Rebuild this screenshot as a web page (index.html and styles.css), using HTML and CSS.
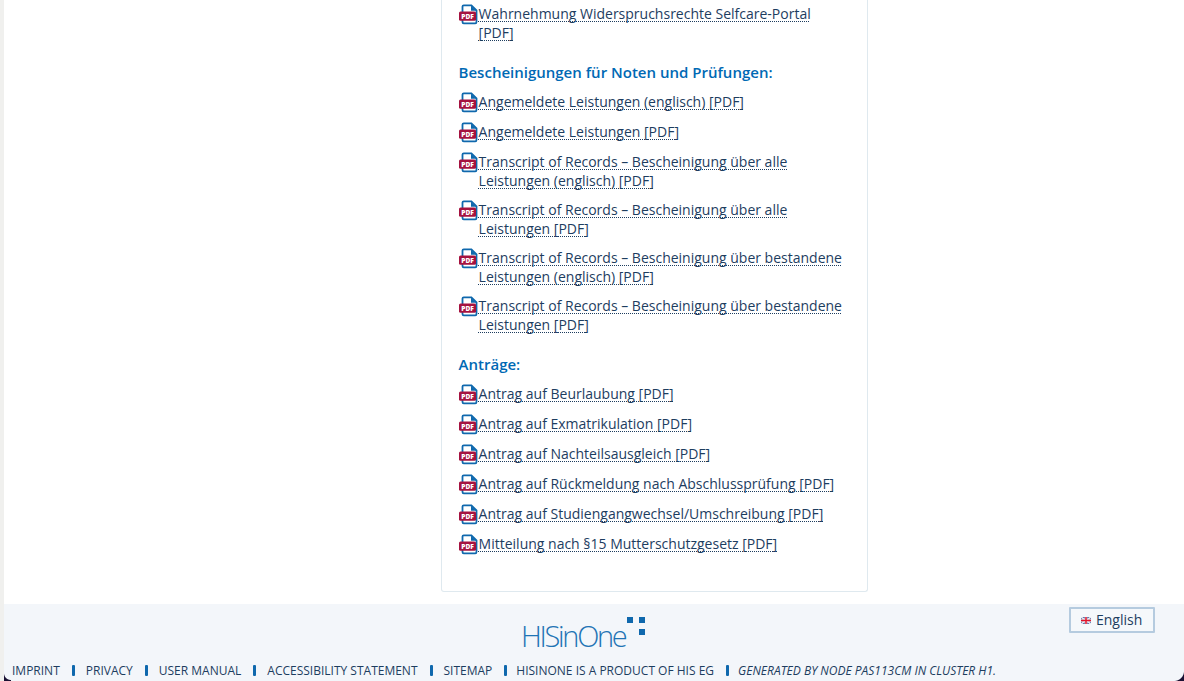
FILE: index.html
```html
<!DOCTYPE html>
<html lang="de">
<head>
<meta charset="utf-8">
<title>HISinOne</title>
<link rel="stylesheet" href="styles.css">
</head>
<body>
<svg class="defs" width="0" height="0" aria-hidden="true">
  <symbol id="pdf" viewBox="0 0.7 19 19" overflow="visible">
    <path d="M4.8 1h7.6l5.1 5.1v11.7a1.3 1.3 0 0 1-1.3 1.3H4.8a1.3 1.3 0 0 1-1.3-1.3V2.3A1.3 1.3 0 0 1 4.8 1z" fill="#fff" stroke="#0f68ad" stroke-width="1.8"/>
    <path d="M12 1.2v5.3h5.3z" fill="#0f68ad"/>
    <rect x="0" y="7.2" width="17" height="9.3" rx="1.6" fill="#a5123f"/>
    <text x="8.5" y="14.3" class="pdf-label">PDF</text>
  </symbol>
</svg>
<div class="page">
  <main class="content">
    <section class="card">
      <ul class="links first">
        <li><a href="#"><svg class="pdf"><use href="#pdf"/></svg>Wahrnehmung Widerspruchsrechte Selfcare-Portal [PDF]</a></li>
      </ul>
      <h3>Bescheinigungen für Noten und Prüfungen:</h3>
      <ul class="links">
        <li><a href="#"><svg class="pdf"><use href="#pdf"/></svg>Angemeldete Leistungen (englisch) [PDF]</a></li>
        <li><a href="#"><svg class="pdf"><use href="#pdf"/></svg>Angemeldete Leistungen [PDF]</a></li>
        <li><a href="#"><svg class="pdf"><use href="#pdf"/></svg>Transcript of Records – Bescheinigung über alle Leistungen (englisch) [PDF]</a></li>
        <li><a href="#"><svg class="pdf"><use href="#pdf"/></svg>Transcript of Records – Bescheinigung über alle Leistungen [PDF]</a></li>
        <li><a href="#"><svg class="pdf"><use href="#pdf"/></svg>Transcript of Records – Bescheinigung über bestandene Leistungen (englisch) [PDF]</a></li>
        <li><a href="#"><svg class="pdf"><use href="#pdf"/></svg>Transcript of Records – Bescheinigung über bestandene Leistungen [PDF]</a></li>
      </ul>
      <h3>Anträge:</h3>
      <ul class="links">
        <li><a href="#"><svg class="pdf"><use href="#pdf"/></svg>Antrag auf Beurlaubung [PDF]</a></li>
        <li><a href="#"><svg class="pdf"><use href="#pdf"/></svg>Antrag auf Exmatrikulation [PDF]</a></li>
        <li><a href="#"><svg class="pdf"><use href="#pdf"/></svg>Antrag auf Nachteilsausgleich [PDF]</a></li>
        <li><a href="#"><svg class="pdf"><use href="#pdf"/></svg>Antrag auf Rückmeldung nach Abschlussprüfung [PDF]</a></li>
        <li><a href="#"><svg class="pdf"><use href="#pdf"/></svg>Antrag auf Studiengangwechsel/Umschreibung [PDF]</a></li>
        <li><a href="#"><svg class="pdf"><use href="#pdf"/></svg>Mitteilung nach §15 Mutterschutzgesetz [PDF]</a></li>
      </ul>
    </section>
  </main>
  <footer class="footer">
    <div class="footer-top">
      <div class="logo">
        <span class="logo-text">HISinOne</span>
        <span class="logo-marks"><i></i><i></i><i class="third"></i></span>
      </div>
      <button class="lang" type="button">
        <svg class="flag" viewBox="0 0 10 7" width="10" height="7" aria-hidden="true">
          <rect width="10" height="7" fill="#3c5a9a"/>
          <path d="M0 0L10 7M10 0L0 7" stroke="#e8e8f0" stroke-width="1.6"/>
          <path d="M5 0V7M0 3.5H10" stroke="#f0f0f0" stroke-width="2.6"/>
          <path d="M5 0V7M0 3.5H10" stroke="#e0142c" stroke-width="1.5"/>
        </svg>English
      </button>
    </div>
    <ul class="foot-nav">
      <li>Imprint</li>
      <li>Privacy</li>
      <li>User Manual</li>
      <li>Accessibility Statement</li>
      <li>Sitemap</li>
      <li class="tight">HISinOne is a product of HIS eG</li>
      <li class="tight node">Generated by node pas113cm in cluster h1.</li>
    </ul>
  </footer>
  <span class="corner left"></span>
  <span class="corner right"></span>
</div>
</body>
</html>
```
FILE: styles.css
```css
* { box-sizing: border-box; }
html, body { margin: 0; padding: 0; height: 100%; overflow: hidden; }
body { font-family: "Open Sans", "Liberation Sans", sans-serif; background: #f0f0ee; color: #1d3d5f; }
.defs { position: absolute; }
.page { position: relative; height: 681px; margin-left: 4px; background: #fff; display: flex; flex-direction: column; overflow: hidden; }
.content { height: 604px; display: flex; flex-direction: column; justify-content: flex-end; align-items: flex-start; padding: 0 0 12px 437px; overflow: hidden; flex: none; }
.card { width: 427px; flex: none; padding: 30px 20px 26px 16.6px; background: #fff; border: 1px solid #dfe9ef; border-top: 0; border-radius: 0 0 3px 3px; }
h3 { margin: 0 0 10px; padding-top: 8px; font-size: 15px; line-height: 22px; font-weight: 600; color: #0069b4; }
.links { list-style: none; margin: 0; padding: 0; }
.links li { font-size: 14px; line-height: 18px; margin-bottom: 11px; padding-left: 20px; }
.links a { color: #1d3d5f; text-decoration: underline dotted #1d3d5f 1px; text-decoration-skip-ink: none; text-underline-offset: 2px; }
.pdf { width: 19px; height: 19px; overflow: visible; vertical-align: -5px; margin: 0 1px 0 -20px; }
.pdf-label { font-family: "Open Sans", sans-serif; font-size: 6.6px; font-weight: 800; fill: #fff; text-anchor: middle; }
.footer { flex: 1; background: #f3f6fa; display: flex; flex-direction: column; padding: 3px 29px 0 8px; }
.footer-top { display: flex; align-items: flex-start; justify-content: space-between; height: 56px; padding-left: 509px; }
.logo { display: flex; align-items: flex-start; padding-top: 10px; }
.logo-text { font-size: 29px; line-height: 30px; font-weight: 300; color: #1f74b5; letter-spacing: -2.3px; padding-top: 4px; }
.logo-marks { display: grid; grid-template-columns: 6px 6px; grid-auto-rows: 6px; gap: 6px; margin-left: 2px; }
.logo-marks i { display: block; background: #0f68ad; }
.logo-marks .third { grid-column: 2; }
.lang { display: flex; align-items: center; gap: 5px; height: 26px; width: 86px; padding: 0 0 0 10px; border: 2px solid #b5cbdf; border-radius: 1px; background: #f5f8fb; font: 14px/18px "Open Sans", sans-serif; color: #1d3d5f; }
.foot-nav { list-style: none; margin: 0; padding: 0; display: flex; align-items: center; font-size: 12px; line-height: 16px; text-transform: uppercase; color: #1d3d5f; white-space: nowrap; }
.foot-nav li + li { margin-left: 12px; padding-left: 14px; position: relative; }
.foot-nav li + li.tight { margin-left: 12px; padding-left: 12px; }
.foot-nav li + li::before { content: ""; position: absolute; left: 0; top: 2px; width: 3px; height: 11px; border-radius: 1px; background: #0f68ad; }
.foot-nav .node { font-style: italic; }
.corner { position: absolute; bottom: 0; }
.corner.left { left: 0; width: 7px; height: 8px; background: radial-gradient(circle at 100% 0, transparent 6.5px, #1a1033 7.5px); }
.corner.right { right: 0; width: 10px; height: 10px; background: radial-gradient(circle at 0 0, transparent 9.5px, #1a1033 10.5px); }
```
